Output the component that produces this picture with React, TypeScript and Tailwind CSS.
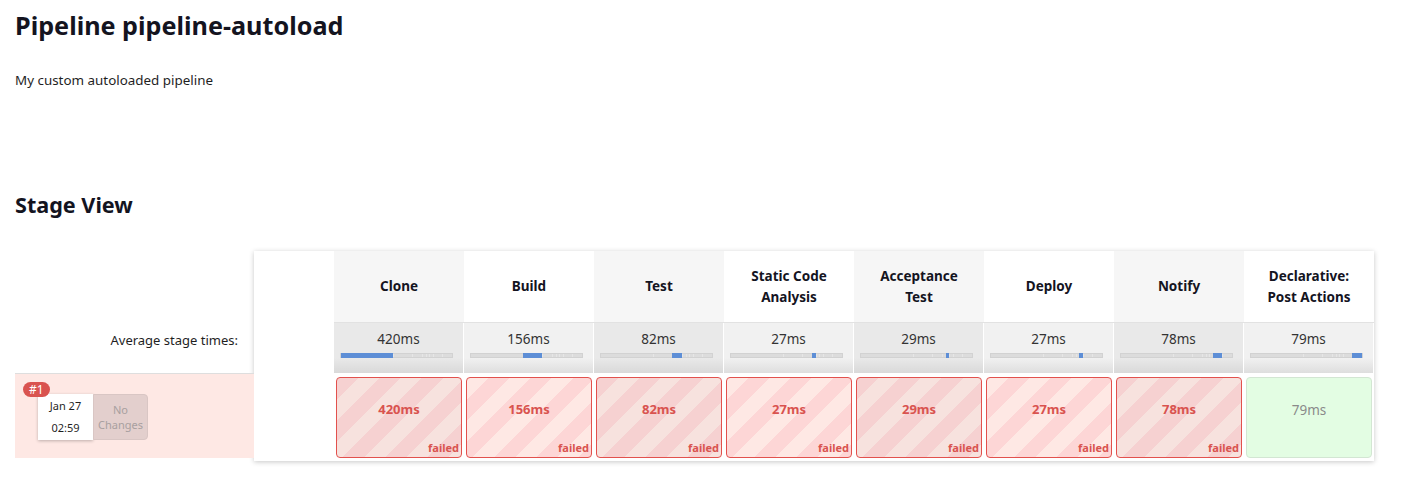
import React from "react";

type Stage = { name: string[]; avg: number; time: string; failed: boolean };

const stages: Stage[] = [
  { name: ["Clone"], avg: 420, time: "420ms", failed: true },
  { name: ["Build"], avg: 156, time: "156ms", failed: true },
  { name: ["Test"], avg: 82, time: "82ms", failed: true },
  { name: ["Static Code", "Analysis"], avg: 27, time: "27ms", failed: true },
  { name: ["Acceptance", "Test"], avg: 29, time: "29ms", failed: true },
  { name: ["Deploy"], avg: 27, time: "27ms", failed: true },
  { name: ["Notify"], avg: 78, time: "78ms", failed: true },
  { name: ["Declarative:", "Post Actions"], avg: 79, time: "79ms", failed: false },
];

const total = stages.reduce((s, x) => s + x.avg, 0);

const ProgressBar = ({ index }: { index: number }) => {
  let start = 0;
  for (let i = 0; i < index; i++) start += stages[i].avg;
  const bounds: number[] = [];
  let acc = 0;
  stages.forEach((s) => {
    acc += s.avg;
    bounds.push((acc / total) * 100);
  });
  return (
    <div className="relative ml-[6px] mt-[4px] h-[5px] w-[113px] bg-[#dcdcdc] border border-[#d2d2d2]">
      {bounds.slice(0, -1).map((b, i) => (
        <div
          key={i}
          className="absolute top-0 h-full w-px bg-[#e6e6e6]"
          style={{ left: `${b}%` }}
        />
      ))}
      <div
        className="absolute top-[-1px] h-[5px] bg-[#5d8ed6]"
        style={{
          left: `${(start / total) * 100}%`,
          width: `${(stages[index].avg / total) * 100}%`,
        }}
      />
    </div>
  );
};

const StageCard = ({ stage, odd }: { stage: Stage; odd: boolean }) => {
  if (!stage.failed) {
    return (
      <div className="flex h-full flex-col rounded-[4px] border border-[#d3e6d3] bg-[#e3fde3]">
        <div className="pt-[22px] text-center text-[13.5px] text-[#8a8a8a]">{stage.time}</div>
      </div>
    );
  }
  return (
    <div
      className={
        odd
          ? "flex h-full flex-col justify-between rounded-[4px] border border-[#e2514d] bg-[repeating-linear-gradient(135deg,#f6d1d1_0,#f6d1d1_15px,#f7e2de_15px,#f7e2de_30px)]"
          : "flex h-full flex-col justify-between rounded-[4px] border border-[#e2514d] bg-[repeating-linear-gradient(135deg,#fee8e4_0,#fee8e4_15px,#fdd6d6_15px,#fdd6d6_30px)]"
      }
    >
      <div className="pt-[22px] text-center text-[13px] font-bold text-[#d9534f]">{stage.time}</div>
      <div className="self-end pb-[2px] pr-[2px] text-[11px] font-bold leading-[14px] text-[#d9534f]">failed</div>
    </div>
  );
};

export default function App() {
  return (
    <div className="min-h-[477px] bg-white px-[15px] pt-[9px] font-['Noto_Sans',sans-serif] text-[#14141f]">
      <h1 className="text-[25.2px] font-bold leading-[32px]">Pipeline pipeline-autoload</h1>
      <p className="mt-[29px] text-[13.4px] leading-[20px] text-[#1f1f1f]">My custom autoloaded pipeline</p>
      <h2 className="mt-[100px] text-[21.6px] font-bold leading-[30px]">Stage View</h2>

      <div className="mt-[31px] flex">
        <div className="flex w-[239px] flex-col">
          <div className="h-[72px]" />
          <div className="h-[50px] pr-[16px] pt-[7px] text-right text-[13px] leading-[20px] text-[#1f1f1f]">
            Average stage times:
          </div>
          <div className="h-[88px]">
            <div className="relative h-[85px] border-t border-[#dedede] bg-[#fee8e4]">
              <span className="absolute left-[8px] top-[8px] z-10 rounded-full bg-[#d9534f] px-[6px] text-[12px] leading-[15px] text-white">
                #1
              </span>
              <div className="ml-[23px] mt-[20px] flex h-[46px] w-[110px]">
                <div className="flex w-[55px] flex-col items-center justify-center bg-white text-[11px] leading-[22px] text-[#1f1f1f] shadow-[0_1px_3px_rgba(0,0,0,0.25)]">
                  <span>Jan 27</span>
                  <span>02:59</span>
                </div>
                <div className="flex w-[55px] flex-col items-center justify-center rounded-r-[4px] border border-[#d9c6c4] bg-[#e3cfcd] text-[11px] leading-[15px] text-[#a8a0a0]">
                  <span>No</span>
                  <span>Changes</span>
                </div>
              </div>
            </div>
          </div>
        </div>

        <div className="flex bg-white shadow-[0_1px_5px_rgba(0,0,0,0.22)]">
          <div className="w-[80px] bg-white" />
          {stages.map((s, i) => {
            const odd = i % 2 === 0;
            return (
              <div key={i} className="flex w-[130px] flex-col">
                <div
                  className={
                    odd
                      ? "flex h-[72px] flex-col items-center justify-center border-b border-[#e2e2e2] bg-[#f6f6f6] text-[13.5px] font-bold leading-[21px]"
                      : "flex h-[72px] flex-col items-center justify-center border-b border-[#e2e2e2] bg-white text-[13.5px] font-bold leading-[21px]"
                  }
                >
                  {s.name.map((n) => (
                    <span key={n}>{n}</span>
                  ))}
                </div>
                <div
                  className={
                    odd
                      ? "h-[50px] border-r border-white bg-[linear-gradient(to_bottom,#e9e9e9_70%,#d9d9d9)] pt-[6px] text-center text-[13.5px] leading-[20px] text-[#333]"
                      : "h-[50px] border-r border-white bg-[linear-gradient(to_bottom,#f1f1f1_70%,#dedede)] pt-[6px] text-center text-[13.5px] leading-[20px] text-[#333]"
                  }
                >
                  {s.time}
                  <ProgressBar index={i} />
                </div>
                <div className="h-[88px] px-[2px] pb-[3px] pt-[4px]">
                  <StageCard stage={s} odd={odd} />
                </div>
              </div>
            );
          })}
        </div>
      </div>
    </div>
  );
}
